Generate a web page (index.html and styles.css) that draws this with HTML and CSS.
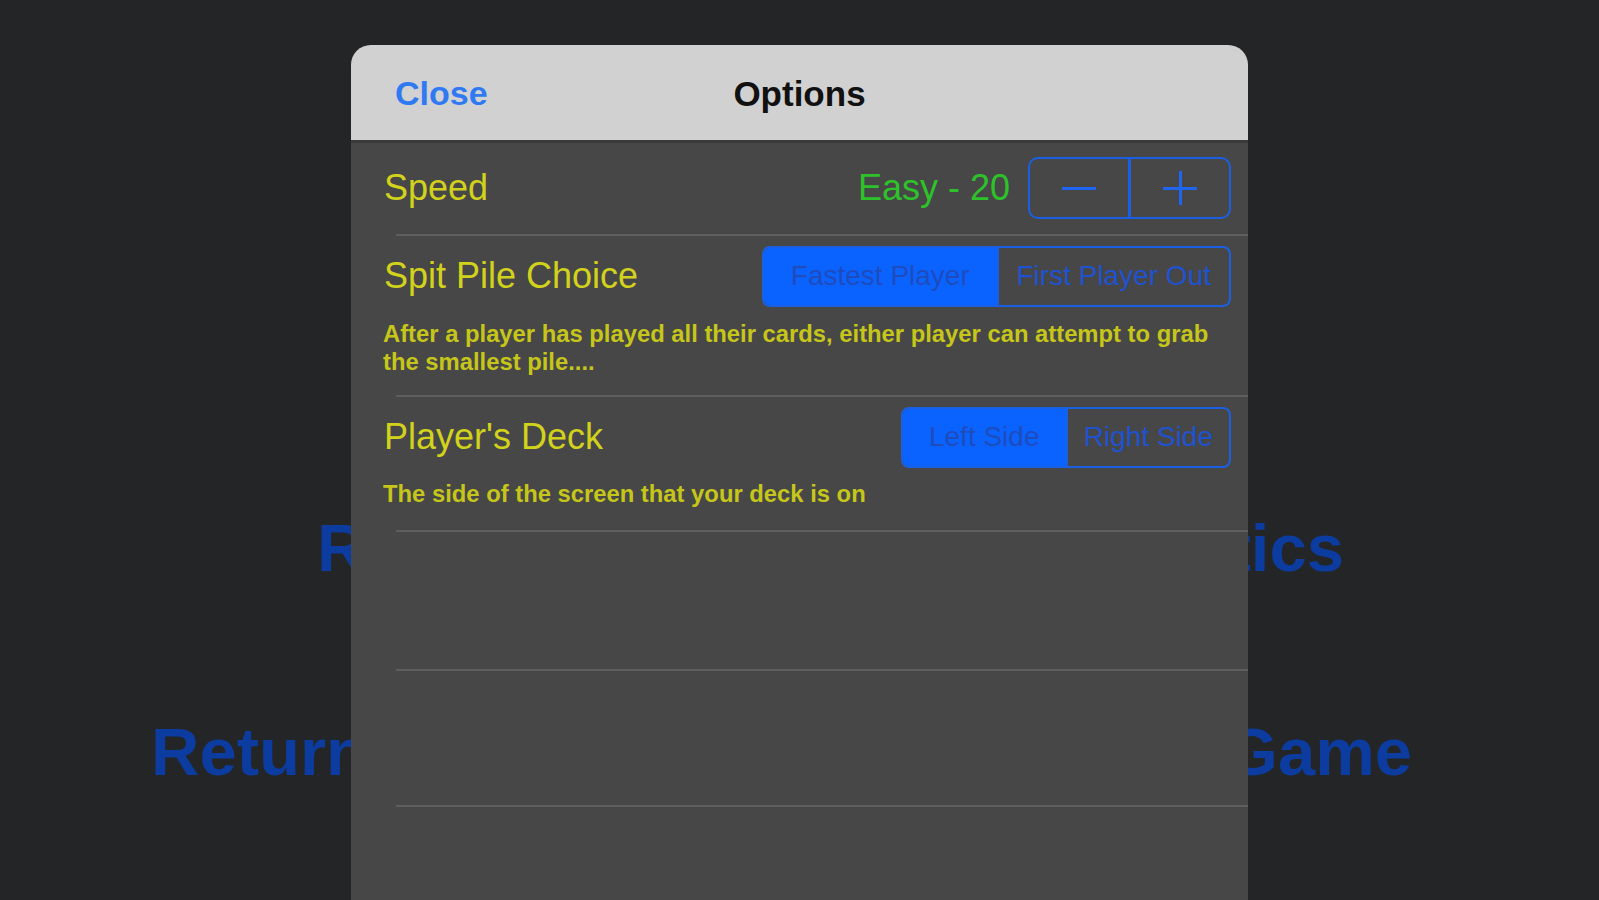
FILE: index.html
```html
<!DOCTYPE html>
<html lang="en">
<head>
<meta charset="utf-8">
<title>Options</title>
<link rel="stylesheet" href="styles.css">
</head>
<body>
<div class="menu">
  <div class="menu-row menu-row-a"><span>Rules</span><span>Statistics</span></div>
  <div class="menu-row menu-row-b"><span>Return</span><span>New Game</span></div>
</div>

<div class="modal">
  <div class="modal-header">
    <span class="close">Close</span>
    <span class="title">Options</span>
  </div>
  <div class="modal-body">
    <div class="option option-speed">
      <div class="option-main">
        <span class="label">Speed</span>
        <div class="speed-right">
          <span class="speed-value">Easy - 20</span>
          <div class="stepper">
            <div class="step"><span class="minus"></span></div>
            <div class="step"><span class="plus"></span></div>
          </div>
        </div>
      </div>
    </div>
    <div class="sep"></div>
    <div class="option option-spit">
      <div class="option-main">
        <span class="label">Spit Pile Choice</span>
        <div class="segmented segmented-wide">
          <span class="seg seg-on">Fastest Player</span>
          <span class="seg">First Player Out</span>
        </div>
      </div>
      <p class="desc">After a player has played all their cards, either player can attempt to grab the smallest pile....</p>
    </div>
    <div class="sep"></div>
    <div class="option option-deck">
      <div class="option-main">
        <span class="label">Player's Deck</span>
        <div class="segmented">
          <span class="seg seg-on">Left Side</span>
          <span class="seg">Right Side</span>
        </div>
      </div>
      <p class="desc">The side of the screen that your deck is on</p>
    </div>
    <div class="sep"></div>
    <div class="empty-row empty-a"></div>
    <div class="sep"></div>
    <div class="empty-row empty-b"></div>
    <div class="sep"></div>
    <div class="empty-row"></div>
  </div>
</div>
</body>
</html>
```
FILE: styles.css
```css
* { box-sizing: border-box; }

html, body {
  margin: 0;
  padding: 0;
  height: 900px;
  overflow: hidden;
}

body {
  background: #242527;
  font-family: "Liberation Sans", Arial, sans-serif;
  position: relative;
}

/* background menu (covered by the modal) */
.menu {
  padding-top: 514px;
  display: flex;
  flex-direction: column;
  gap: 137px;
}

.menu-row {
  display: flex;
  justify-content: space-between;
  font-size: 67px;
  line-height: 67px;
  font-weight: 700;
  color: #0c3c9f;
}

.menu-row-a { padding: 0 255px 0 317px; }
.menu-row-b { padding: 0 187px 0 151px; }

/* modal sheet */
.modal {
  position: absolute;
  left: 351px;
  top: 45px;
  width: 897px;
  height: 855px;
  background: #474747;
  border-radius: 20px 20px 0 0;
  overflow: hidden;
}

.modal-header {
  height: 98px;
  background: #d1d1d1;
  border-bottom: 3px solid #3a3a3a;
  display: flex;
  align-items: center;
  justify-content: center;
  position: relative;
}

.close {
  position: absolute;
  left: 44px;
  top: 29px;
  font-size: 34px;
  font-weight: 700;
  color: #2f79f2;
}

.title {
  font-size: 35px;
  font-weight: 700;
  color: #111111;
  margin-top: 3px;
}

.modal-body {
  display: flex;
  flex-direction: column;
}

.modal-body > * { flex: none; }

.sep {
  height: 2px;
  margin-left: 45px;
  background: #5e5e5e;
}

.option {
  padding-left: 33px;
  padding-right: 17px;
}

.option-speed { padding-top: 14px; padding-bottom: 15px; }
.option-spit { padding-top: 9px; padding-bottom: 19px; }
.option-deck { padding-top: 9px; padding-bottom: 22px; }

.option-main {
  display: flex;
  align-items: center;
  justify-content: space-between;
  height: 62px;
}

.label {
  font-size: 36px;
  color: #d2d21c;
}

.speed-right {
  display: flex;
  align-items: center;
  gap: 18px;
}

.speed-value {
  font-size: 36px;
  color: #2ec22a;
}

.stepper {
  display: flex;
  width: 203px;
  height: 62px;
  border: 2px solid #1b5fe2;
  border-radius: 10px;
}

.step {
  flex: 1 1 0;
  display: flex;
  align-items: center;
  justify-content: center;
  position: relative;
}

.step + .step {
  border-left: 3px solid #1b5fe2;
}

.minus, .plus {
  position: relative;
  width: 34px;
  height: 34px;
}

.minus::before, .plus::before, .plus::after {
  content: "";
  position: absolute;
  background: #1e66f2;
}

.minus::before, .plus::before {
  left: 0;
  right: 0;
  top: 16px;
  height: 3px;
}

.plus::after {
  top: 0;
  bottom: 0;
  left: 16px;
  width: 3px;
}

.segmented {
  display: grid;
  grid-auto-flow: column;
  grid-auto-columns: 1fr;
  height: 61px;
  border: 2px solid #1b5fe2;
  border-radius: 8px;
  overflow: hidden;
}

.seg {
  display: flex;
  align-items: center;
  justify-content: center;
  padding: 0 16px;
  font-size: 28px;
  color: #1f52cf;
  white-space: nowrap;
}

.segmented-wide .seg { padding: 0 18px; }

.seg + .seg {
  border-left: 2px solid #1b5fe2;
}

.seg-on {
  background: #0a63ff;
  color: #1f4cbd;
}

.desc {
  margin: 13px 0 0 -1px;
  font-size: 23.8px;
  line-height: 28px;
  font-weight: 700;
  color: #c6c61a;
}

.option-deck .desc { margin-top: 12px; }

.empty-row { height: 137px; }
.empty-b { height: 134px; }
```
